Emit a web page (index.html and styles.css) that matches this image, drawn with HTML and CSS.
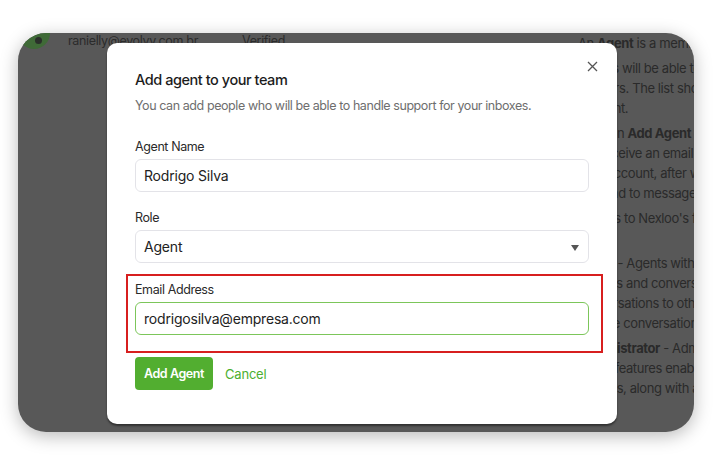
FILE: index.html
```html
<!DOCTYPE html>
<html>
<head>
<meta charset="utf-8">
<link rel="stylesheet" href="styles.css">
</head>
<body>
<div class="frame">
  <div class="bg">
    <div class="list">
      <div class="row">
        <span class="avatar"><span class="dot"></span></span>
        <span class="email">ranielly@evolvy.com.br</span>
        <span class="status">Verified</span>
      </div>
    </div>
    <div class="help">
      <p><span class="ln">An <b>Agent</b> is a member of your customer support team.</span></p>
      <p><span class="ln">Agents will be able to view and reply to messages</span><span class="ln">all users. The list shows all agents</span><span class="ln">account.</span></p>
      <p><span class="ln">Click on <b>Add Agent</b> to add a new agent.</span><span class="ln">will receive an email with a confirmation</span><span class="ln">their account, after which they can access</span><span class="ln">respond to messages.</span></p>
      <p><span class="ln">Access to Nexloo's features are based on</span><span class="ln">roles.</span></p>
      <p><span class="ln"><b>Agent</b> - Agents with this role can only access</span><span class="ln">inboxes and conversations. They can assign</span><span class="ln">conversations to other agents or themselves and</span><span class="ln">resolve conversations.</span></p>
      <p><span class="ln"><b>Administrator</b> - Administrator will have</span><span class="ln">of the features enabled for your</span><span class="ln">settings, along with all of a</span></p>
    </div>
  </div>

  <div class="modal">
    <button class="close" aria-label="Close">
      <svg width="11" height="11" viewBox="0 0 11 11"><path d="M1 1L10 10M10 1L1 10" stroke="#555" stroke-width="1.3" fill="none"/></svg>
    </button>
    <h2 class="title">Add agent to your team</h2>
    <p class="subtitle">You can add people who will be able to handle support for your inboxes.</p>

    <div class="field">
      <label class="label">Agent Name</label>
      <div class="input">Rodrigo Silva</div>
    </div>
    <div class="field">
      <label class="label">Role</label>
      <div class="input select">Agent<span class="caret"></span></div>
    </div>
    <div class="field highlight">
      <label class="label">Email Address</label>
      <div class="input focused">rodrigosilva@empresa.com</div>
    </div>
    <div class="actions">
      <button class="btn">Add Agent</button>
      <button class="link">Cancel</button>
    </div>
  </div>
</div>
</body>
</html>
```

FILE: styles.css
```css
* { box-sizing: border-box; }
html, body { margin: 0; padding: 0; background: #ffffff; }
body {
  font-family: "Inter", "Noto Sans", sans-serif;
  width: 722px;
  height: 458px;
  overflow: hidden;
  padding: 33px 28px 0 18px;
}
.frame {
  position: relative;
  width: 676px;
  height: 399px;
  background: #585858;
  border-radius: 28px;
  overflow: hidden;
  box-shadow: 0 4px 18px rgba(0,0,0,0.28);
}
.bg {
  display: grid;
  grid-template-columns: 560px 1fr;
  height: 100%;
}
.list { padding-left: 0; }
.row {
  display: flex;
  align-items: center;
  height: 16px;
  margin-top: -1px;
  color: #2b2b2b;
  font-size: 12.5px;
  letter-spacing: -0.35px;
}
.avatar {
  width: 32px; height: 32px;
  border-radius: 50%;
  background: #3f6a37;
  margin-top: -14px;
  display: flex; align-items: center; justify-content: center;
  flex: none;
}
.dot { width: 7px; height: 7px; border-radius: 50%; background: #2a2f2a; margin: 14px 0 0 8px; }
.email { margin-left: 18px; }
.status { margin-left: 44px; }
.help {
  color: #2a2a2a;
  font-size: 13px;
  letter-spacing: -0.4px;
  line-height: 20px;
}
.help p { margin: 0 0 5px; }
.help .ln { display: block; white-space: nowrap; }
.help b { font-weight: 700; }

.modal {
  position: absolute;
  left: 89px;
  top: 10px;
  width: 510px;
  background: #ffffff;
  border-radius: 10px;
  padding: 27px 28px 34px 28px;
  box-shadow: 0 2px 2px rgba(0,0,0,0.45);
}
.close {
  position: absolute;
  right: 19px;
  top: 18px;
  border: 0; background: none; padding: 0;
  width: 11px; height: 11px;
  display: block;
}
.close svg { display: block; }
.title {
  margin: 0;
  font-size: 14.5px;
  line-height: 20px;
  font-weight: 500;
  color: #1c1c1c;
  letter-spacing: -0.45px;
}
.subtitle {
  margin: 7px 0 0;
  font-size: 12.5px;
  line-height: 18px;
  color: #6e6e6e;
  letter-spacing: -0.42px;
}
.field { margin-top: 17px; }
.field:first-of-type { margin-top: 23px; }
.label {
  display: block;
  font-size: 12.5px;
  line-height: 18px;
  color: #2a2a2a;
  letter-spacing: -0.4px;
  margin-bottom: 3px;
}
.input {
  height: 33px;
  border: 1px solid #e3e3e8;
  border-radius: 6px;
  padding: 0 8px;
  display: flex;
  align-items: center;
  font-size: 14px;
  color: #222;
  letter-spacing: -0.2px;
}
.select { position: relative; }
.caret {
  position: absolute;
  right: 9px;
  top: 14px;
  width: 0; height: 0;
  border-left: 4px solid transparent;
  border-right: 4px solid transparent;
  border-top: 6px solid #555;
}
.focused { border-color: #7cc65a; }
.highlight {
  margin: 11px -14px 0 -9px;
  padding: 5px 12px 16px 7px;
  border: 2px solid #d71f1f;
}
.actions {
  display: flex;
  align-items: center;
  gap: 12px;
  margin-top: 4px;
}
.btn {
  height: 33px;
  width: 78px;
  border: 0;
  border-radius: 4px;
  background: #52ae30;
  color: #fff;
  font-family: inherit;
  font-size: 12.5px;
  font-weight: 600;
  letter-spacing: -0.4px;
  padding: 0;
}
.link {
  border: 0;
  background: none;
  padding: 0;
  color: #4caf2f;
  font-family: inherit;
  font-size: 13px;
  letter-spacing: -0.2px;
}
```
